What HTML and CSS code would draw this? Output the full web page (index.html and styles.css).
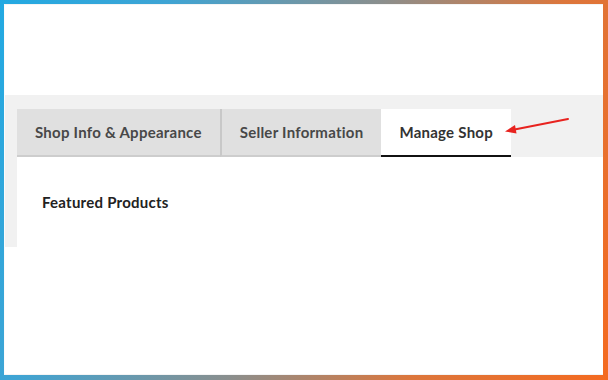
FILE: index.html
```html
<!DOCTYPE html>
<html>
<head>
<meta charset="utf-8">
<link rel="stylesheet" href="styles.css">
</head>
<body>
<div class="frame">
  <div class="page">
    <div class="top"></div>
    <div class="panel">
      <div class="tabs">
        <div class="tab">Shop Info &amp; Appearance</div>
        <div class="tab sep">Seller Information</div>
        <div class="tab active">Manage Shop</div>
      </div>
      <div class="content">
        <div class="heading">Featured Products</div>
      </div>
    </div>
    <svg class="arrow" width="80" height="30" viewBox="0 0 80 30">
      <line x1="66" y1="5" x2="10" y2="16" stroke="#e8231f" stroke-width="2" stroke-linecap="round"/>
      <polygon points="3,17.5 13,11 14.5,19.5" fill="#e8231f"/>
    </svg>
  </div>
</div>
</body>
</html>
```
FILE: styles.css
```css
html, body {
  margin: 0;
  padding: 0;
}
body {
  width: 608px;
  height: 380px;
  overflow: hidden;
  font-family: "Lato", "Noto Sans", sans-serif;
}
.frame {
  width: 608px;
  height: 380px;
  box-sizing: border-box;
  padding: 4px 5px 5px 4px;
  background: linear-gradient(112deg, #22a9e2 0%, #3ea4d4 22%, #8a8f8e 50%, #dc763c 74%, #f46a20 100%);
}
.page {
  position: relative;
  height: 100%;
  background: #fff;
  border-left: 1px solid #fbfbfb;
  border-top: 1px solid #f4f4f4;
  border-bottom: 1px solid #f4f4f4;
  box-sizing: border-box;
}
.top {
  height: 90px;
}
.panel {
  background: #f1f1f1;
  padding: 14px 0 0 12px;
  display: flex;
  flex-direction: column;
}
.tabs {
  display: flex;
  height: 48px;
}
.tab {
  background: #e0e0e0;
  color: #484848;
  font-weight: 700;
  font-size: 15px;
  letter-spacing: 0.25px;
  padding: 0 18px;
  display: flex;
  align-items: center;
  border-bottom: 2px solid #cdcdcd;
  box-sizing: border-box;
}
.tab.sep {
  border-left: 2px solid #c8c8c8;
}
.tab.active {
  background: #fff;
  color: #333;
  border-bottom: 2px solid #111;
}
.content {
  background: #fff;
  height: 90px;
  padding: 36px 0 0 25px;
  box-sizing: border-box;
}
.heading {
  font-weight: 700;
  font-size: 15px;
  letter-spacing: 0.25px;
  color: #222;
}
.arrow {
  position: absolute;
  left: 497px;
  top: 109px;
}
```
